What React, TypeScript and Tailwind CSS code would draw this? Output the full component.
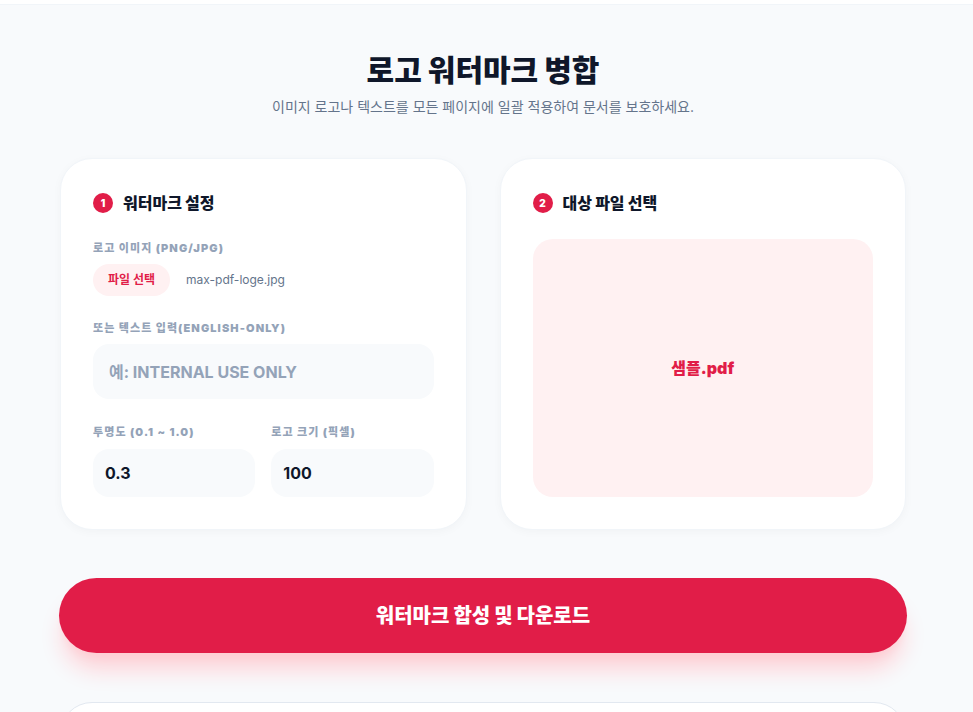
const font = { fontFamily: "Inter, 'Noto Sans CJK KR', sans-serif" }

function StepTitle({ n, children }: { n: number; children: React.ReactNode }) {
  return (
    <div className="flex items-center gap-2.5">
      <span className="flex h-5 w-5 items-center justify-center rounded-full bg-[#e11d48] text-[10px] font-black text-white">
        {n}
      </span>
      <h2 className="text-base font-black text-[#0f172a]">{children}</h2>
    </div>
  )
}

function Label({ children }: { children: React.ReactNode }) {
  return <p className="text-[11px] font-black leading-4 uppercase tracking-widest text-[#94a3b8]">{children}</p>
}

const card = 'rounded-[32px] border border-[#f1f5f9] bg-white px-8 pb-8 pt-8 shadow-[0_2px_10px_rgba(15,23,42,0.03)]'

export default function App() {
  return (
    <div style={font} className="min-h-[712px] bg-[#f8fafc]">
      <div className="h-[5px] border-b border-[#f1f5f9] bg-white" />

      <main className="ml-[60px] w-[846px] pt-[45px]">
        <header className="text-center">
          <h1 className="text-[30px] font-black leading-[40px] text-[#0f172a]">로고 워터마크 병합</h1>
          <p className="mt-[7px] text-sm text-[#64748b]">
            이미지 로고나 텍스트를 모든 페이지에 일괄 적용하여 문서를 보호하세요.
          </p>
        </header>

        <div className="mt-[41px] grid grid-cols-2 gap-[33px]">
          <section className={card}>
            <StepTitle n={1}>워터마크 설정</StepTitle>

            <div className="mt-[25px]">
              <Label>로고 이미지 (PNG/JPG)</Label>
              <div className="mt-[8px] flex items-center gap-4">
                <button className="h-8 rounded-full bg-[#fff1f2] px-[15px] text-xs font-bold text-[#e11d48]">파일 선택</button>
                <span className="text-xs text-[#64748b]">max-pdf-loge.jpg</span>
              </div>
            </div>

            <div className="mt-[24px]">
              <Label>또는 텍스트 입력(English-Only)</Label>
              <div className="mt-2 flex h-[55px] items-center rounded-2xl bg-[#f8fafc] px-4 text-base font-bold text-[#94a3b8]">
                예: INTERNAL USE ONLY
              </div>
            </div>

            <div className="mt-[25px] grid grid-cols-2 gap-4">
              <div>
                <Label>투명도 (0.1 ~ 1.0)</Label>
                <div className="mt-[9px] flex h-12 items-center rounded-2xl bg-[#f8fafc] px-3 text-base font-bold text-[#0f172a]">
                  0.3
                </div>
              </div>
              <div>
                <Label>로고 크기 (픽셀)</Label>
                <div className="mt-[9px] flex h-12 items-center rounded-2xl bg-[#f8fafc] px-3 text-base font-bold text-[#0f172a]">
                  100
                </div>
              </div>
            </div>
          </section>

          <section className={`flex flex-col ${card}`}>
            <StepTitle n={2}>대상 파일 선택</StepTitle>
            <div className="mt-[24px] flex flex-1 items-center justify-center rounded-[20px] bg-[#fff1f2] text-base font-black text-[#e11d48]">
              샘플.pdf
            </div>
          </section>
        </div>

        <button className="mt-[48px] -ml-px flex h-[75px] w-[848px] items-center justify-center rounded-full bg-[#e11d48] text-xl font-black text-white shadow-xl shadow-[#fecdd3]">
          워터마크 합성 및 다운로드
        </button>

        <div className="mt-[49px] h-20 rounded-[32px] border border-[#e2e8f0] bg-white" />
      </main>
    </div>
  )
}
